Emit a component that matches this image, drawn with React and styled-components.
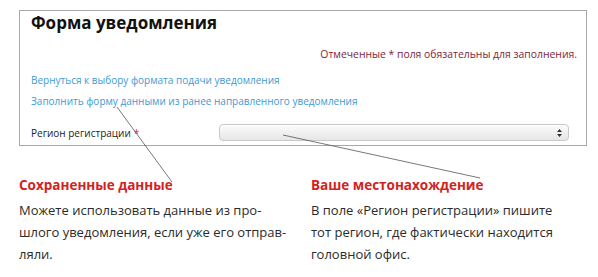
import React from "react";
import styled, { createGlobalStyle } from "styled-components";

const GlobalStyle = createGlobalStyle`
    html, body {
        margin: 0;
        padding: 0;
        background: #ffffff;
    }
    body {
        font-family: "Open Sans", "Liberation Sans", sans-serif;
    }
`;

const Page = styled.div`
    position: relative;
    width: 598px;
    height: 277px;
    overflow: hidden;
    padding-top: 10px;
    box-sizing: border-box;
`;

const FormBox = styled.div`
    margin-left: 19px;
    width: 568px;
    height: 136px;
    box-sizing: border-box;
    border: 1px solid #a8a8a8;
    padding: 1px 9px 0 11px;
    display: flex;
    flex-direction: column;
`;

const Title = styled.h1`
    margin: 0;
    font-size: 17px;
    line-height: 22px;
    font-weight: 700;
    color: #111111;
`;

const Required = styled.div`
    margin-top: 13px;
    text-align: right;
    font-size: 10.4px;
    line-height: 14px;
    color: #7d1e3a;
`;

const LinkList = styled.div`
    margin-top: 12px;
    display: flex;
    flex-direction: column;
    gap: 7px;
`;

const FormLink = styled.a`
    font-size: 10px;
    line-height: 14px;
    color: #3c9bd4;
    text-decoration: none;
    cursor: pointer;
`;

const FieldRow = styled.div`
    margin-top: 16px;
    display: flex;
    align-items: center;
`;

const Label = styled.label`
    width: 188px;
    font-size: 10px;
    color: #222222;
`;

const Star = styled.span`
    color: #e0302b;
    margin-left: 3px;
`;

const Select = styled.div`
    width: 350px;
    height: 17px;
    box-sizing: border-box;
    border: 1px solid #c9c9c9;
    border-radius: 4px;
    background: linear-gradient(#fbfbfb, #e6e6e6);
    box-shadow: inset 0 1px 0 #ffffff;
    display: flex;
    align-items: center;
    justify-content: flex-end;
    padding-right: 5px;
`;

const Notes = styled.div`
    display: grid;
    grid-template-columns: 292px 1fr;
    padding-left: 19px;
    margin-top: 30px;
`;

const Note = styled.div`
    display: flex;
    flex-direction: column;
`;

const NoteTitle = styled.div`
    font-size: 13.5px;
    line-height: 18px;
    font-weight: 700;
    color: #d2231f;
`;

const NoteText = styled.p`
    margin: 5px 0 0;
    font-size: 13px;
    line-height: 22px;
    color: #2b2b2b;
`;

const Callouts = styled.svg`
    position: absolute;
    left: 0;
    top: 0;
    pointer-events: none;
`;

function Arrows() {
    return (
        <svg width="7" height="10" viewBox="0 0 7 10">
            <path d="M3.5 1 L6 4 H1 Z M3.5 9 L6 6 H1 Z" fill="#333" />
        </svg>
    );
}

export default function App() {
    return (
        <>
            <GlobalStyle />
            <Page>
                <FormBox>
                    <Title>Форма уведомления</Title>
                    <Required>Отмеченные * поля обязательны для заполнения.</Required>
                    <LinkList>
                        <FormLink>Вернуться к выбору формата подачи уведомления</FormLink>
                        <FormLink>Заполнить форму данными из ранее направленного уведомления</FormLink>
                    </LinkList>
                    <FieldRow>
                        <Label>
                            Регион регистрации<Star>*</Star>
                        </Label>
                        <Select>
                            <Arrows />
                        </Select>
                    </FieldRow>
                </FormBox>
                <Notes>
                    <Note>
                        <NoteTitle>Сохраненные данные</NoteTitle>
                        <NoteText>
                            Можете использовать данные из про-
                            <br />
                            шлого уведомления, если уже его отправ-
                            <br />
                            ляли.
                        </NoteText>
                    </Note>
                    <Note>
                        <NoteTitle>Ваше местонахождение</NoteTitle>
                        <NoteText>
                            В поле «Регион регистрации» пишите
                            <br />
                            тот регион, где фактически находится
                            <br />
                            головной офис.
                        </NoteText>
                    </Note>
                </Notes>
                <Callouts width="598" height="277">
                    <line x1="117" y1="107" x2="172" y2="182" stroke="#555" strokeWidth="0.8" />
                    <line x1="283" y1="135" x2="480" y2="178" stroke="#555" strokeWidth="0.8" />
                </Callouts>
            </Page>
        </>
    );
}
